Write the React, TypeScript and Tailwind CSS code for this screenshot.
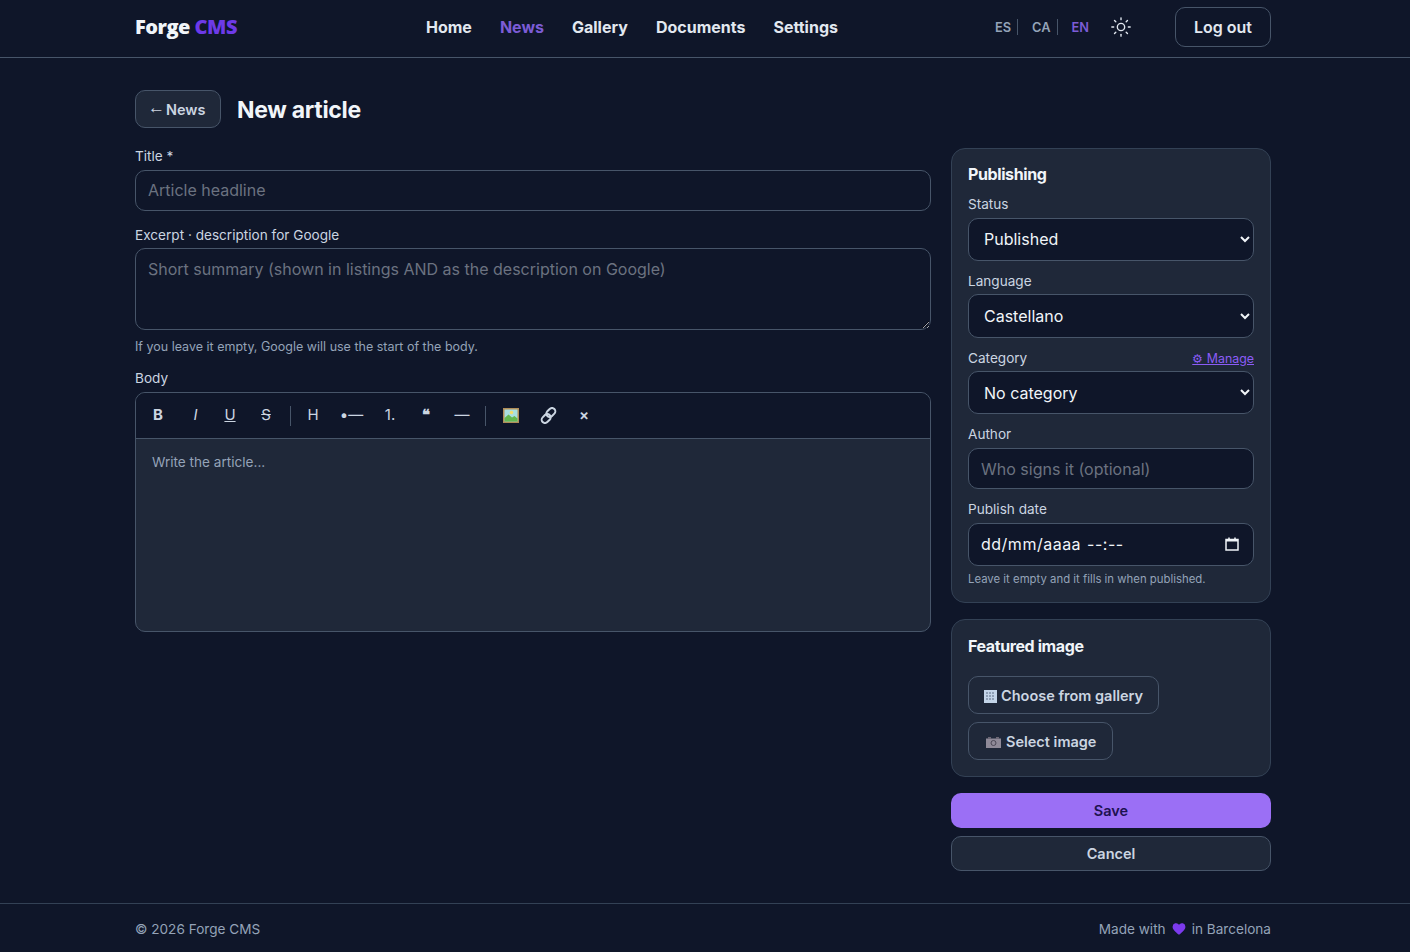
import { Sun } from "lucide-react";
import type { ReactNode } from "react";

const label = "block text-[13.6px] leading-[17px] text-[#cbd5e1]";
const field =
  "block w-full rounded-[10px] border border-[#475569] bg-[#0f1629] px-3 text-[16px] text-[#f1f5f9] outline-none placeholder:text-[#6b7280]";
const outlineBtn =
  "flex h-[38px] items-center rounded-[10px] border border-[#475569] bg-[#1f2839] pt-[2px] text-[14.5px] font-semibold text-[#cbd5e1]";

function Tool({ children, className = "" }: { children: ReactNode; className?: string }) {
  return (
    <button className={`flex h-7 w-7 items-center justify-center text-[15px] text-[#cbd5e1] ${className}`}>
      {children}
    </button>
  );
}

function Select({ value, className = "h-[43px]" }: { value: string; className?: string }) {
  return (
    <select
      defaultValue={value}
      className={`block w-full rounded-[10px] border border-[#475569] bg-[#0f1629] pl-[11px] pr-3 text-[16px] text-[#f1f5f9] outline-none [color-scheme:dark] ${className}`}
    >
      <option>{value}</option>
    </select>
  );
}

export default function App() {
  return (
    <div className="flex min-h-[952px] flex-col bg-[#0f1629] font-['Inter',sans-serif] text-[#f1f5f9]">
      <header className="h-[58px] border-b border-[#475569]">
        <div className="ml-[135px] flex h-[57px] w-[1136px] items-center pb-1">
          <div className="w-[291px] font-['Open_Sans',sans-serif] text-[20px] font-extrabold tracking-[-0.5px] text-[#f1f5f9]">
            Forge <span className="text-[#6d3ae8]">CMS</span>
          </div>
          <nav className="flex gap-7 text-[16px] font-bold text-[#e2e8f0]">
            <a>Home</a>
            <a className="text-[#7c5cd6]">News</a>
            <a>Gallery</a>
            <a>Documents</a>
            <a>Settings</a>
          </nav>
          <div className="ml-auto flex items-center text-[12.8px] font-semibold text-[#94a3b8]">
            <span className="border-r border-[#475569] pr-[6px] pt-px leading-[15px]">ES</span>
            <span className="ml-[14px] border-r border-[#475569] pr-[6px] pt-px leading-[15px]">CA</span>
            <span className="ml-[14px] pt-[2px] leading-[15px] text-[#7c5cd6]">EN</span>
            <Sun className="ml-[21px] h-[22px] w-[22px] text-[#e2e8f0]" strokeWidth={1.5} />
            <button className="ml-[43px] h-10 w-24 rounded-[10px] border border-[#475569] text-[16px] font-semibold text-[#e2e8f0]">
              Log out
            </button>
          </div>
        </div>
      </header>

      <main className="ml-[135px] w-[1136px] flex-1 pt-[32px]">
        <div className="flex h-[38px] items-center gap-4">
          <button className="flex h-[38px] w-[86px] items-center gap-px rounded-[10px] border border-[#475569] bg-[#1f2839] pl-3 pt-[2px] text-[14.5px] font-semibold text-[#cbd5e1]">
            <span className="mb-[5px] font-['Liberation_Sans',sans-serif] text-[17px] font-normal leading-none">←</span> News
          </button>
          <h1 className="pt-px text-[23px] font-bold leading-[28px] tracking-[-0.3px] text-[#f1f5f9]">New article</h1>
        </div>

        <div className="mt-5 flex items-start gap-5">
          <div className="w-[796px]">
            <label className={label}>Title *</label>
            <input placeholder="Article headline" className={`${field} mt-[5px] h-[41px] pb-[2px]`} />

            <label className={`${label} mt-[16px]`}>Excerpt · description for Google</label>
            <textarea
              placeholder="Short summary (shown in listings AND as the description on Google)"
              className={`${field} mt-[4px] h-[82px] py-[8px] leading-[24px]`}
            />
            <p className="mt-[9px] text-[12.5px] leading-[15px] text-[#94a3b8]">
              If you leave it empty, Google will use the start of the body.
            </p>

            <label className={`${label} mt-[16px]`}>Body</label>
            <div className="mt-[5px] h-[240px] overflow-hidden rounded-[10px] border border-[#475569] bg-[#1f2839]">
              <div className="flex h-[46px] items-center gap-2 border-b border-[#475569] bg-[#0f1629] pl-2">
                <Tool className="font-bold">B</Tool>
                <Tool className="pl-[3px] italic">I</Tool>
                <Tool className="underline">U</Tool>
                <Tool className="line-through">S</Tool>
                <div className="ml-[2px] h-5 w-px bg-[#475569]" />
                <Tool>H</Tool>
                <Tool className="w-[33px]">•—</Tool>
                <Tool>1.</Tool>
                <Tool className="font-bold">❝</Tool>
                <Tool>—</Tool>
                <div className="mx-px h-5 w-px bg-[#475569]" />
                <Tool className="w-[31px]">
                  <svg viewBox="0 0 16 15" className="h-[15px] w-4">
                    <rect width="16" height="15" fill="#b08d57" />
                    <rect x="1.500" y="1.500" width="13" height="12" fill="#a9dfe0" />
                    <circle cx="8.500" cy="4.500" r="1.800" fill="#f3dc6b" />
                    <path d="M1.500 10 5.500 6.500 9 9.500 11.500 8l3 2.500v3h-13z" fill="#63b84f" />
                  </svg>
                </Tool>
                <Tool>
                  <svg viewBox="0 0 18 18" className="h-[17px] w-[17px]" fill="none" stroke="currentColor" strokeWidth="2.1">
                    <rect x="8" y="0.500" width="7" height="10.500" rx="3.500" transform="rotate(45 11.500 5.750)" />
                    <rect x="3" y="7" width="7" height="10.500" rx="3.500" transform="rotate(45 6.500 12.250)" />
                  </svg>
                </Tool>
                <Tool className="font-semibold">×</Tool>
              </div>
              <div className="px-4 py-[15px] text-[13.6px] leading-[17px] text-[#94a3b8]">Write the article...</div>
            </div>
          </div>

          <aside className="w-[320px]">
            <section className="h-[455px] rounded-[14px] border border-[#334155] bg-[#1f2839] px-4 pt-[15px]">
              <h2 className="text-[16px] font-bold leading-[20px] tracking-[-0.4px] text-[#f1f5f9]">Publishing</h2>
              <label className={`${label} mt-[12px]`}>Status</label>
              <div className="mt-[5px]"><Select value="Published" className="h-[43px] pb-[2px]" /></div>

              <label className={`${label} mt-[12px]`}>Language</label>
              <div className="mt-[4px]"><Select value="Castellano" className="h-[44px]" /></div>

              <div className="mt-[12px] flex items-center justify-between">
                <label className={label}>Category</label>
                <a className="text-[12.4px] leading-[17px] text-[#8b5cf6] underline">⚙ Manage</a>
              </div>
              <div className="mt-[4px]"><Select value="No category" /></div>

              <label className={`${label} mt-[12px]`}>Author</label>
              <input placeholder="Who signs it (optional)" className={`${field} mt-[5px] h-[41px]`} />

              <label className={`${label} mt-[12px]`}>Publish date</label>
              <div className="mt-[5px] flex h-[43px] items-center rounded-[10px] border border-[#475569] bg-[#0f1629] pb-[2px] pl-3 pr-[14px] text-[16px] tracking-[0.5px] text-[#f1f5f9]">
                <span>dd/mm/aaaa</span>
                <span className="ml-[6px]">--:--</span>
                <svg viewBox="0 0 14 14" className="ml-auto h-[14px] w-[14px]" fill="none" stroke="#f1f5f9">
                  <rect x="1" y="2.500" width="12" height="10.500" strokeWidth="1.500" />
                  <path d="M1 3.500h12" strokeWidth="2" />
                  <path d="M4 0.500v2M10 0.500v2" strokeWidth="1.500" />
                </svg>
              </div>
              <p className="mt-[6px] text-[11.36px] leading-[14px] text-[#94a3b8]">Leave it empty and it fills in when published.</p>
            </section>

            <section className="mt-4 h-[158px] rounded-[14px] border border-[#334155] bg-[#1f2839] px-4 pt-4">
              <h2 className="text-[16px] font-bold leading-[20px] tracking-[-0.4px] text-[#f1f5f9]">Featured image</h2>
              <div className="mt-5 flex flex-col items-start gap-2">
                <button className={`${outlineBtn} w-[191px] pl-[15px]`}>
                  <svg viewBox="0 0 13 13" className="mr-1 h-[13px] w-[13px]">
                    <rect width="13" height="13" fill="#c3d4e8" />
                    <path d="M2 3h9M2 6h9M2 9h9" stroke="#5b6b82" strokeWidth="1" strokeDasharray="2 1" />
                  </svg>
                  Choose from gallery
                </button>
                <button className={`${outlineBtn} w-[145px] pl-[17px]`}>
                  <svg viewBox="0 0 15 11" className="mr-[5px] h-[11px] w-[15px]">
                    <rect y="1.500" width="15" height="9.500" fill="#8f8a98" />
                    <rect x="2" width="3" height="2" fill="#6b6775" />
                    <rect x="10" width="3" height="2" fill="#6b6775" />
                    <circle cx="7.500" cy="6" r="2.500" fill="none" stroke="#4b4856" />
                  </svg>
                  Select image
                </button>
              </div>
            </section>

            <button className="mt-4 block h-[35px] w-full rounded-[10px] bg-[#9b6ff5] text-[14.5px] font-semibold text-[#1e1250]">Save</button>
            <button className="mt-2 block h-[35px] w-full rounded-[10px] border border-[#475569] bg-[#1f2839] text-[14.5px] font-semibold text-[#cbd5e1]">Cancel</button>
          </aside>
        </div>
      </main>

      <footer className="h-[49px] border-t border-[#334155]">
        <div className="ml-[135px] flex h-full w-[1136px] items-center justify-between pt-[2px] text-[13.6px] text-[#94a3b8]">
          <span>© 2026 Forge CMS</span>
          <span className="flex items-center gap-[6px]">
            Made with
            <svg viewBox="0 0 24 24" className="mt-px h-[14px] w-[14px]" fill="#7c3aed">
              <path d="M12 22C5 16 1 12.500 1 8a6 6 0 0 1 11-3.300A6 6 0 0 1 23 8c0 4.500-4 8-11 14z" />
            </svg>
            in Barcelona
          </span>
        </div>
      </footer>
    </div>
  );
}
